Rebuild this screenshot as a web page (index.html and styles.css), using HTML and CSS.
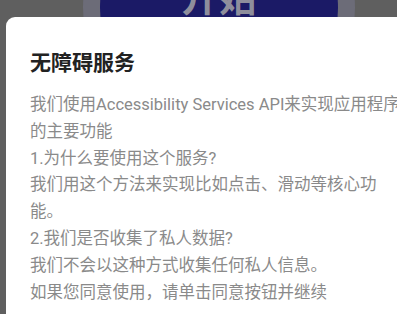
FILE: index.html
```html
<!DOCTYPE html>
<html lang="zh-CN">

<head>
  <meta charset="UTF-8">
  <meta name="viewport" content="width=device-width, initial-scale=1.0">
  <title>无障碍服务</title>
  <link rel="stylesheet" href="styles.css">
</head>

<body>

  <!-- bouton derrière la boîte de dialogue -->
  <div class="start-button">
    <div class="start-inner">开始</div>
  </div>

  <div class="dialog">
    <h2 class="dialog-title">无障碍服务</h2>
    <div class="dialog-text">
      <p>我们使用Accessibility Services API来实现应用程序的主要功能</p>
      <p>1.为什么要使用这个服务?<br>我们用这个方法来实现比如点击、滑动等核心功能。<br>2.我们是否收集了私人数据?<br>我们不会以这种方式收集任何私人信息。<br>如果您同意使用，请单击同意按钮并继续</p>
    </div>
  </div>

</body>

</html>
```

FILE: styles.css
```css
* {
  box-sizing: border-box;
  margin: 0;
  padding: 0;
}

body {
  font-family: Roboto, 'Noto Sans CJK SC', sans-serif;
  background-color: #5f5f5f;
  width: 397px;
  height: 314px;
  overflow: hidden;
  position: relative;
}

.start-button {
  position: absolute;
  left: 83px;
  top: -128px;
  width: 272px;
  height: 272px;
  border-radius: 50%;
  background-color: #6c6c78;
  padding: 17px;
}

.start-inner {
  width: 100%;
  height: 100%;
  border-radius: 50%;
  background-color: #1b1a66;
  color: #8e8e9c;
  font-size: 38px;
  font-weight: bold;
  display: flex;
  justify-content: center;
  align-items: center;
  line-height: 1;
  padding-bottom: 20px;
}

.dialog {
  position: relative;
  margin: 17px 0 0 6px;
  width: 433px;
  min-height: 320px;
  background-color: #fff;
  border-radius: 9px 9px 0 0;
  padding: 32px 35px 0 24px;
}

.dialog-title {
  font-size: 21px;
  font-weight: bold;
  color: #222;
  line-height: 28px;
  margin-bottom: 15px;
}

.dialog-text {
  font-size: 16.5px;
  color: #8a8a8a;
  line-height: 26.8px;
}

.dialog-text p {
  margin-bottom: 0;
}
```
